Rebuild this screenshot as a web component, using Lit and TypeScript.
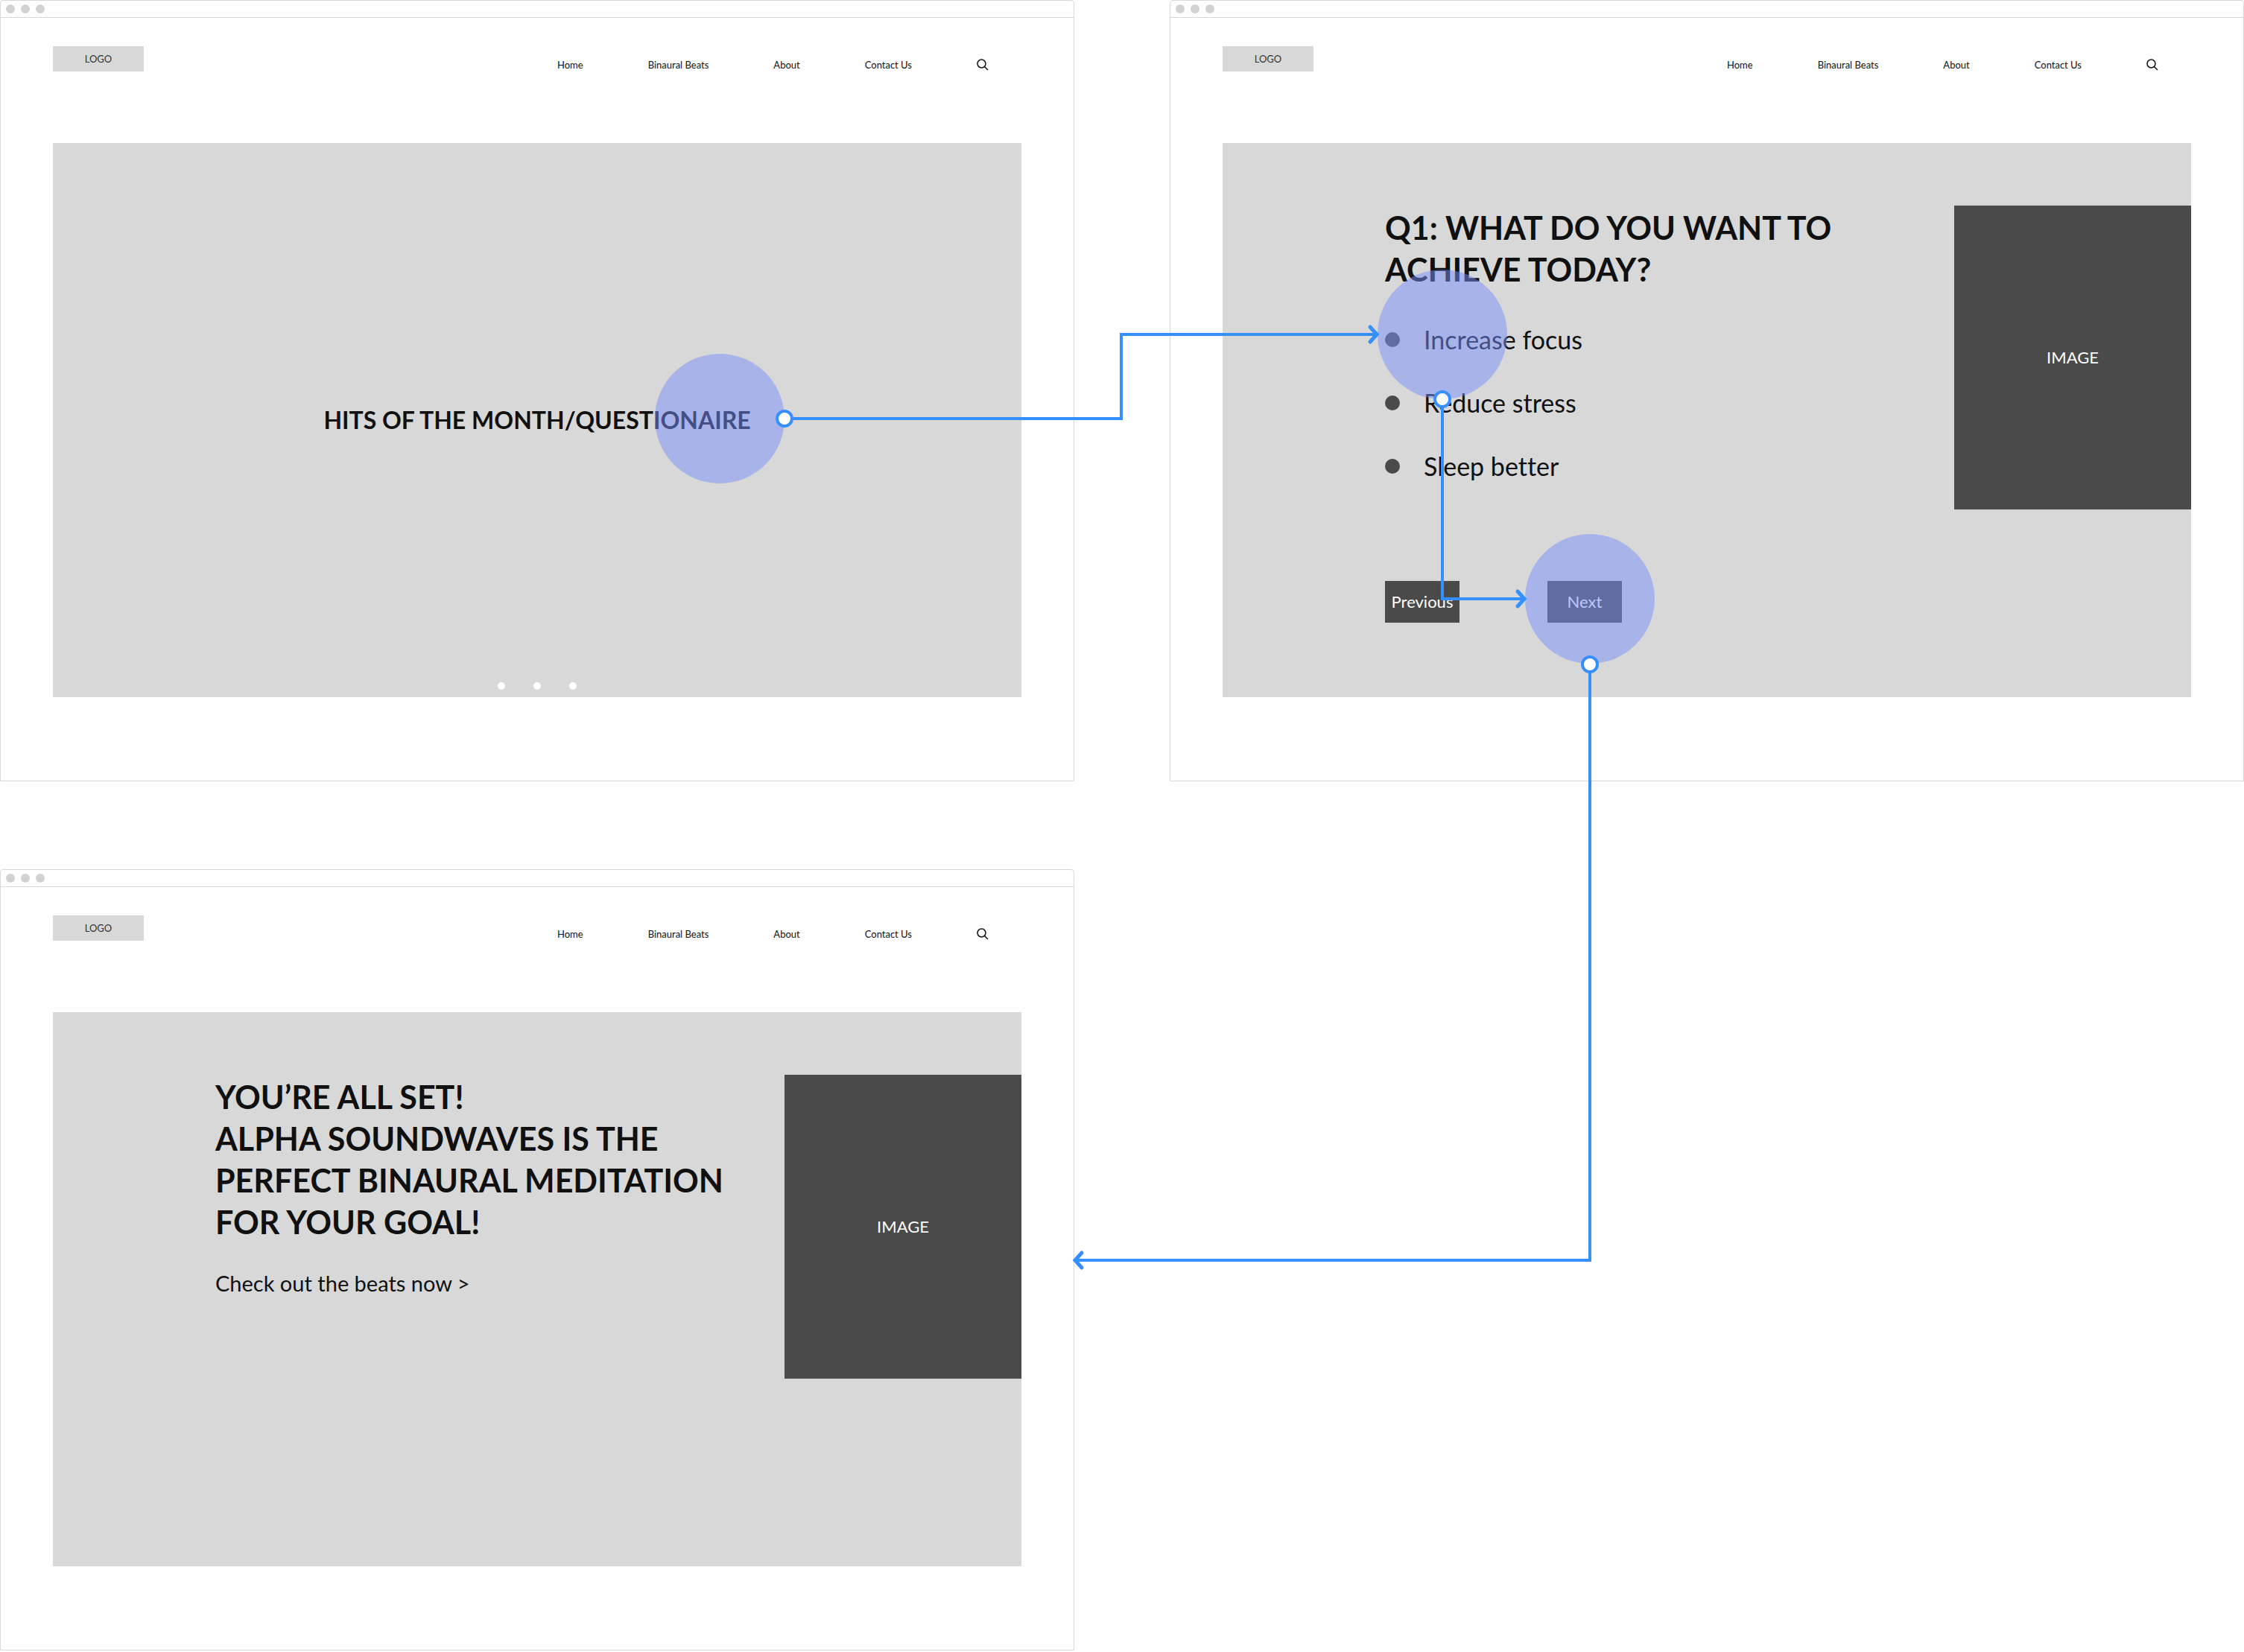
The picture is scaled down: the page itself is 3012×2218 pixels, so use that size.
import { LitElement, html, css, svg } from "lit";
import { customElement, property } from "lit/decorators.js";

/* Browser window frame with the site header and a hero panel. */
@customElement("site-frame")
export class SiteFrame extends LitElement {
  static styles = css`
    :host {
      display: block;
      box-sizing: border-box;
      border: 1px solid #d8d8d8;
      border-radius: 4px 4px 0 0;
      background: #fff;
      color: #101010;
    }
    .titlebar {
      display: flex;
      align-items: center;
      gap: 8px;
      height: 22px;
      padding: 0 7px;
      border-bottom: 1px solid #d8d8d8;
    }
    .light {
      width: 12px;
      height: 12px;
      border-radius: 50%;
      background: #d2d2d2;
    }
    .page {
      padding: 38px 70px 112px;
    }
    .header {
      display: flex;
      justify-content: space-between;
      align-items: flex-start;
      padding-bottom: 96px;
    }
    .logo {
      display: flex;
      align-items: center;
      justify-content: center;
      width: 122px;
      height: 34px;
      background: #d8d8d8;
      color: #333;
      font-size: 13px;
      line-height: 20px;
      text-decoration: none;
    }
    .nav {
      display: flex;
      align-items: center;
      gap: 87px;
      padding: 15px 44px 0 0;
      height: 19px;
      font-size: 13px;
      line-height: 20px;
    }
    .nav a {
      color: inherit;
      text-decoration: none;
    }
    .search {
      display: block;
      border: 0;
      padding: 0;
      background: none;
      color: inherit;
      width: 16px;
      height: 16px;
    }
    .search svg {
      display: block;
    }
    .hero {
      display: flex;
      flex-direction: column;
      min-height: 744px;
      background: #d8d8d8;
    }
  `;

  render() {
    return html`
      <div class="titlebar">
        <span class="light"></span><span class="light"></span><span class="light"></span>
      </div>
      <div class="page">
        <header class="header">
          <a class="logo" href="#">LOGO</a>
          <nav class="nav">
            <a href="#home">Home</a>
            <a href="#beats">Binaural Beats</a>
            <a href="#about">About</a>
            <a href="#contact">Contact Us</a>
            <button class="search" aria-label="Search">
              <svg width="16" height="16" viewBox="0 0 16 16" fill="none" stroke="currentColor" stroke-width="1.5">
                <circle cx="6.5" cy="6.5" r="5.5" />
                <path d="M10.5 10.5 15 15" />
              </svg>
            </button>
          </nav>
        </header>
        <main class="hero"><slot></slot></main>
      </div>
    `;
  }
}

/* Hero body: copy on the left, picture placeholder flush with the right edge. */
@customElement("split-panel")
export class SplitPanel extends LitElement {
  @property() heading = "";

  static styles = css`
    :host {
      display: flex;
      justify-content: space-between;
      align-items: flex-start;
      padding: 84px 0 84px 218px;
    }
    .copy {
      flex: 0 1 700px;
      padding-top: 2px;
    }
    .heading {
      margin: 0;
      font-size: 43px;
      line-height: 56px;
      font-weight: 700;
      white-space: pre-line;
    }
    .image {
      display: flex;
      align-items: center;
      justify-content: center;
      flex: none;
      width: 318px;
      height: 408px;
      background: #4a4a4a;
      color: #fff;
      font-size: 22px;
      line-height: 28px;
    }
  `;

  render() {
    return html`
      <div class="copy">
        <h1 class="heading">${this.heading}</h1>
        <slot></slot>
      </div>
      <div class="image">IMAGE</div>
    `;
  }
}

interface Link {
  path: string;
  tip: string;
  start: [number, number];
}

const HOTSPOTS: [number, number][] = [
  [966, 562],
  [1936, 449],
  [2134, 804],
];

const LINKS: Link[] = [
  { path: "M1053 562H1505V449H1848", tip: "M1839 439 1848 449 1839 459", start: [1053, 562] },
  { path: "M1936 536V804H2046", tip: "M2037 794 2046 804 2037 814", start: [1936, 536] },
  { path: "M2134 892V1692H1444", tip: "M1452 1682 1443 1692 1452 1702", start: [2134, 892] },
];

@customElement("app-root")
export class AppRoot extends LitElement {
  static styles = css`
    :host {
      display: block;
      position: relative;
      font-family: Lato, "Open Sans", sans-serif;
      font-variant-ligatures: none;
      background: #fff;
    }
    .board {
      display: grid;
      grid-template-columns: 1fr 1fr;
      gap: 118px 128px;
    }
    .slide {
      flex: 1;
      display: grid;
      grid-template-rows: 1fr auto 1fr;
      justify-items: center;
    }
    .title {
      grid-row: 2;
      margin: 0;
      font-size: 32px;
      line-height: 40px;
      font-weight: 700;
    }
    .dots {
      grid-row: 3;
      display: flex;
      gap: 38px;
      align-self: end;
      padding-bottom: 10px;
    }
    .dot {
      width: 10px;
      height: 10px;
      padding: 0;
      border: 0;
      border-radius: 50%;
      background: #fff;
    }
    .options {
      display: grid;
      gap: 45px;
      margin: 46px 0 134px;
      padding: 0;
      list-style: none;
      font-size: 34px;
      line-height: 40px;
    }
    .option {
      display: flex;
      align-items: center;
      gap: 32px;
    }
    .bullet {
      width: 20px;
      height: 20px;
      border-radius: 50%;
      background: #4a4a4a;
    }
    .actions {
      display: flex;
      gap: 118px;
    }
    .action {
      width: 100px;
      height: 56px;
      padding: 0;
      border: 0;
      background: #4a4a4a;
      color: #fff;
      font: inherit;
      font-size: 22px;
      line-height: 28px;
    }
    .more {
      display: block;
      margin-top: 34px;
      color: inherit;
      font-size: 29px;
      line-height: 40px;
      text-decoration: none;
    }
    .flow {
      position: absolute;
      top: 0;
      left: 0;
      width: 100%;
      pointer-events: none;
    }
  `;

  private link({ path, tip, start }: Link) {
    return svg`
      <path d=${path} />
      <path d=${tip} stroke-width="5" stroke-linecap="round" />
      <circle cx=${start[0]} cy=${start[1]} r="10" fill="#fff" />
    `;
  }

  render() {
    return html`
      <div class="board">
        <site-frame>
          <section class="slide">
            <h1 class="title">HITS OF THE MONTH/QUESTIONAIRE</h1>
            <div class="dots">
              ${[1, 2, 3].map((n) => html`<button class="dot" aria-label="Slide ${n}"></button>`)}
            </div>
          </section>
        </site-frame>

        <site-frame>
          <split-panel .heading=${"Q1: WHAT DO YOU WANT TO\nACHIEVE TODAY?"}>
            <ul class="options">
              ${["Increase focus", "Reduce stress", "Sleep better"].map(
                (label) => html`<li class="option"><span class="bullet"></span>${label}</li>`
              )}
            </ul>
            <div class="actions">
              <button class="action">Previous</button>
              <button class="action">Next</button>
            </div>
          </split-panel>
        </site-frame>

        <site-frame>
          <split-panel
            .heading=${"YOU’RE ALL SET!\nALPHA SOUNDWAVES IS THE\nPERFECT BINAURAL MEDITATION\nFOR YOUR GOAL!"}
          >
            <a class="more" href="#beats">Check out the beats now &gt;</a>
          </split-panel>
        </site-frame>
      </div>

      <svg class="flow" viewBox="0 0 3012 2218" aria-hidden="true">
        <g fill="#768efa" fill-opacity="0.5">
          ${HOTSPOTS.map(([x, y]) => svg`<circle cx=${x} cy=${y} r="87" />`)}
        </g>
        <g fill="none" stroke="#368fff" stroke-width="4">${LINKS.map((l) => this.link(l))}</g>
      </svg>
    `;
  }
}
